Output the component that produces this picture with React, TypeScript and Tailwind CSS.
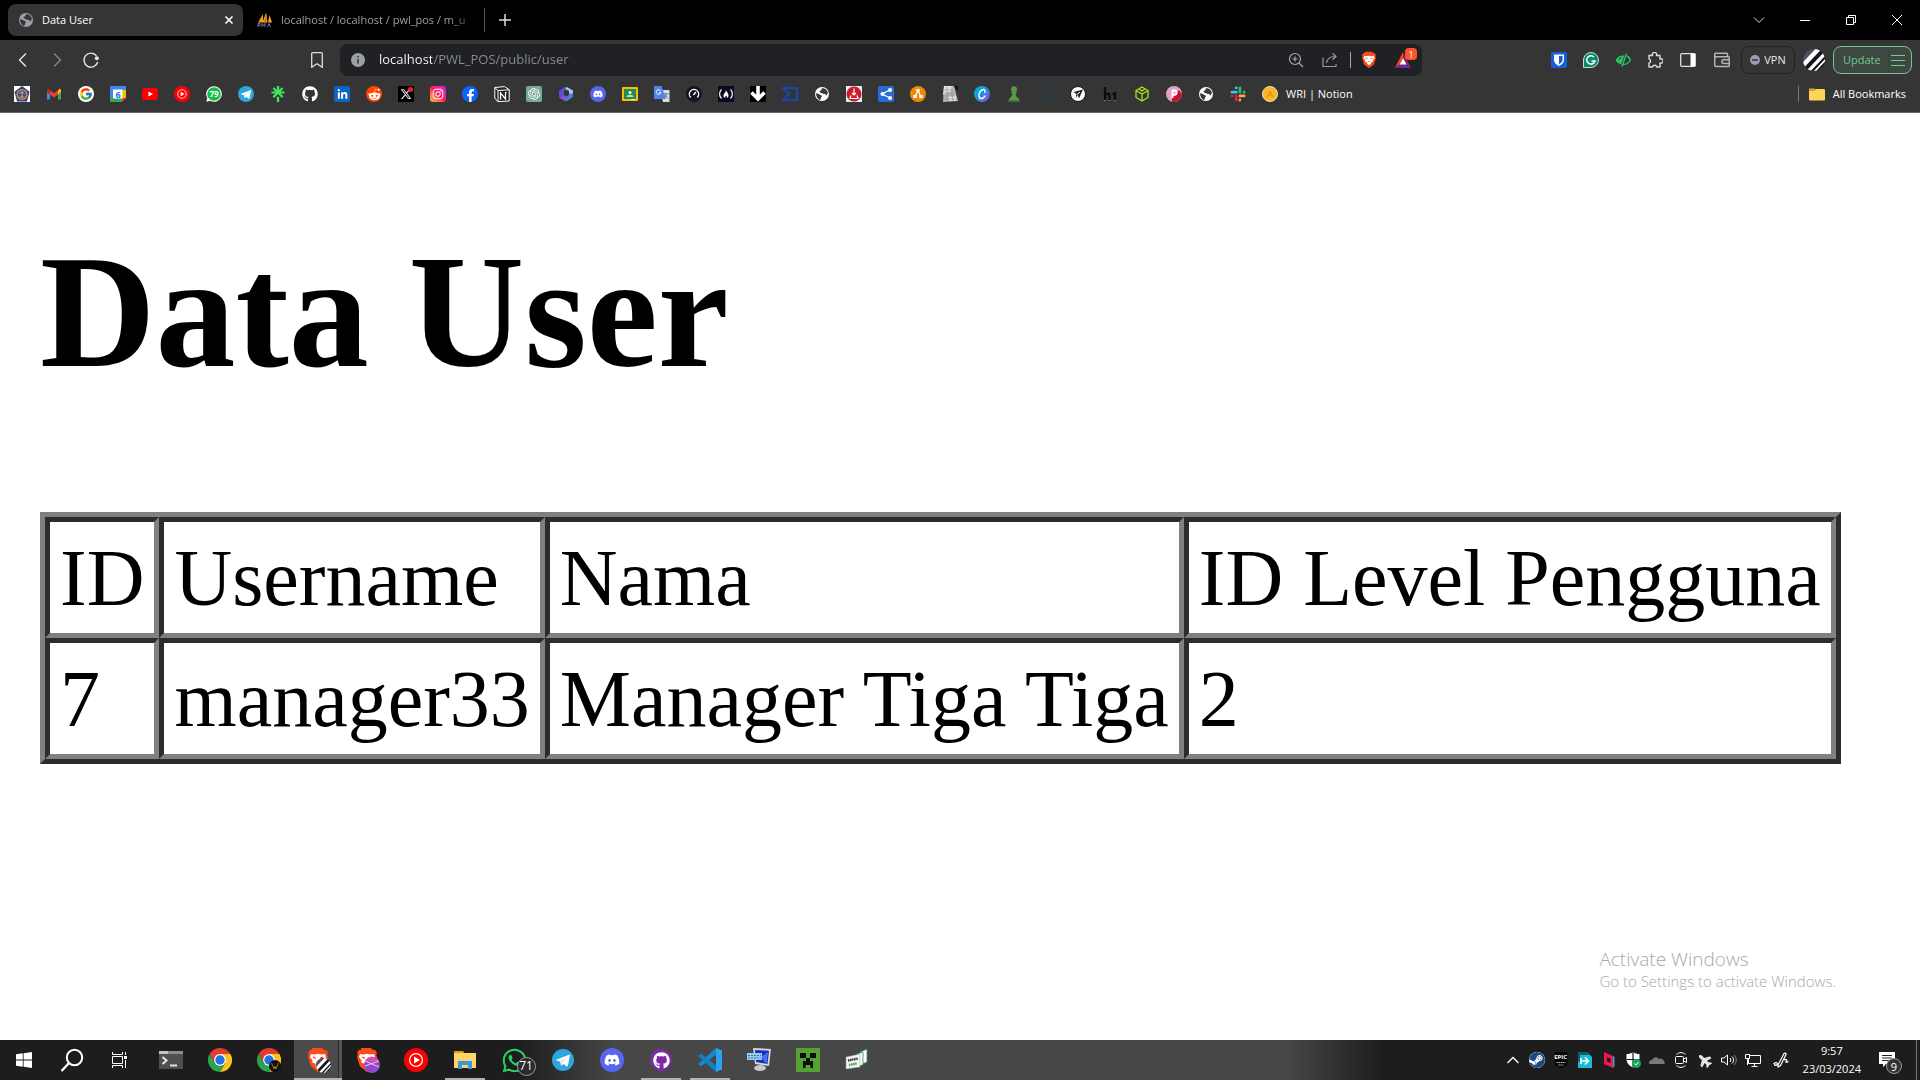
import React from "react";
import { FaGithub, FaRedditAlien, FaLinkedinIn, FaDiscord, FaFacebookF, FaWhatsapp, FaInstagram, FaPlane } from "react-icons/fa";
import { FaXTwitter } from "react-icons/fa6";
import { FcGoogle } from "react-icons/fc";
import { SiLinktree, SiOpenai, SiSteam } from "react-icons/si";

type SvgProps = { size?: number; box?: number; children: React.ReactNode };

const Svg = ({ size = 16, box = 16, children }: SvgProps) => (
  <svg width={size} height={size} viewBox={`0 0 ${box} ${box}`} fill="none" className="shrink-0" aria-hidden="true">
    {children}
  </svg>
);

const Tile = ({ className, children }: { className: string; children?: React.ReactNode }) => (
  <span className={`flex size-4 shrink-0 items-center justify-center overflow-hidden ${className}`}>{children}</span>
);

const Globe = ({ bg = "#9aa0a6", land = "#35363a" }: { bg?: string; land?: string }) => (
  <Svg>
    <circle cx="8" cy="8" r="7" fill={bg} />
    <path d="M2 7.200c1.600.1 2.600.6 3.600 1.400s2.200.5 2.200 1.700c0 1-1 1.200-1 2.300 0 .9-.3 1.300-1 1.300C3.600 13 2 10.500 2 7.200Z" fill={land} />
    <path d="M5.400 5.600c.3-1 1.300-1 1.900-1.700.5-.6.300-1.300 1-1.900 2.600.1 4.800 1.900 5.600 4.300-.3 1.300-.6 2.500-1.500 3.200-.8-.3-.6-1.300-1.500-1.500-1-.3-2 .1-2.700-.5-.8-.7-2.300-.5-2.800-1.900Z" fill={land} />
  </Svg>
);

const Telegram = ({ size = 16 }: { size?: number }) => (
  <Svg size={size} box={24}>
    <circle cx="12" cy="12" r="12" fill="#2da5de" />
    <path d="M4.500 11.800 18.600 6.200c.7-.2 1.200.2 1 1.200l-2.300 11c-.2.800-.7 1-1.300.6l-3.700-2.700-1.900 1.800c-.3.300-.6.300-.7-.3l-.9-4-3.900-1.200c-.8-.2-.8-.6-.4-.8Z" fill="#fff" />
    <path d="m9.200 13.500 7.300-4.900-5.900 5.800-.4 3Z" fill="#b9dcf0" />
  </Svg>
);

const YtMusic = ({ size = 16 }: { size?: number }) => (
  <Svg size={size} box={24}>
    <circle cx="12" cy="12" r="12" fill="#f00" />
    <circle cx="12" cy="12" r="6.400" stroke="#fff" strokeWidth="1.200" />
    <path d="m10 8.500 6 3.500-6 3.500Z" fill="#fff" />
  </Svg>
);

const BrowserBall = ({ children }: { children?: React.ReactNode }) => (
  <Svg size={24} box={24}>
    <path d="M12 6h10.400A12 12 0 0 1 12 24l5.200-9Z" fill="#fcc31e" />
    <path d="M1.600 6A12 12 0 0 1 22.400 6H12l-5.200 9Z" fill="#e33b2e" />
    <path d="M1.600 6 6.800 15A6 6 0 0 0 17.200 15L12 24A12 12 0 0 1 1.600 6Z" fill="#2ba24c" />
    <circle cx="12" cy="12" r="5.900" fill="#fff" />
    <circle cx="12" cy="12" r="4.700" fill="#1f72e8" />
    {children}
  </Svg>
);

const BraveLion = ({ size = 26, children }: { size?: number; children?: React.ReactNode }) => (
  <Svg size={size} box={26}>
    <path d="M7 1h10l2 2 2-.2 2 3-.8 2 .8 2.200-3 9.500L13 25l-7-5.500L3 10l.8-2.200L3 5.800l2-3L7 3Z" fill="#fb4a1c" />
    <path d="m6 7 4 .6 3-.8 3 .8 4-.6 1 3-2.600 3.500.3 2L15 17l1 1.200-3 2.400-3-2.400L11 17l-3.700-1.500.3-2L5 10Z" fill="#fff" />
    <path d="m8 9.500 3 1-.3 1.200L8 11ZM18 9.500l-3 1 .3 1.200L18 11ZM11 14.500h4L13 16Z" fill="#fb4a1c" />
    {children}
  </Svg>
);

const StripedDisc = ({ cx, cy, r, id }: { cx: number; cy: number; r: number; id: string }) => (
  <g>
    <clipPath id={id}>
      <circle cx={cx} cy={cy} r={r} />
    </clipPath>
    <g clipPath={`url(#${id})`}>
      <circle cx={cx} cy={cy} r={r} fill="#15161b" />
      <path d={`M${cx - r} ${cy - r}h${r * 1.4}l${-r * 1.4} ${r * 1.4}Z`} fill="#4c5066" />
      <path d={`M${cx - r} ${cy + r * 0.5}L${cx + r * 0.5} ${cy - r * 1.1}`} stroke="#fff" strokeWidth={r * 0.4} />
      <path d={`M${cx - r * 0.5} ${cy + r}L${cx + r * 1.1} ${cy - r * 0.7}`} stroke="#fff" strokeWidth={r * 0.3} />
      <path d={`M${cx} ${cy + r * 1.1}L${cx + r * 1.2} ${cy - r * 0.2}`} stroke="#fff" strokeWidth={r * 0.16} />
    </g>
  </g>
);

const bookmarks: { name: string; icon: React.ReactNode }[] = [
  {
    name: "Campus",
    icon: (
      <Tile className="bg-white">
        <Svg>
          <path d="m8 0 7.500 5.700L13 15.500H3L.5 5.700Z" fill="#24448c" />
          <circle cx="8" cy="8.500" r="5.500" fill="#e98a3a" />
          <circle cx="8" cy="8.500" r="4.200" fill="#34519a" />
          <path d="M8 5v7M5.500 7.500 8 6l2.500 1.500M5.500 11h5" stroke="#e5a04a" />
        </Svg>
      </Tile>
    ),
  },
  {
    name: "Gmail",
    icon: (
      <Svg>
        <path d="M1 4v9.500h3V7Z" fill="#4285f4" />
        <path d="M15 4v9.500h-3V7Z" fill="#34a853" />
        <path d="M1 4.500v1.700l3 2.300V4.700L2.800 3C2 2.400 1 3.200 1 4.500Z" fill="#c5221f" />
        <path d="M15 4.500v1.700l-3 2.300V4.700L13.200 3c.8-.6 1.800.2 1.800 1.500Z" fill="#fbbc04" />
        <path d="m4 4.200 4 3 4-3v4.300l-4 3-4-3Z" fill="#ea4335" />
      </Svg>
    ),
  },
  { name: "Google", icon: <Tile className="rounded-full bg-white"><FcGoogle size={14} /></Tile> },
  {
    name: "Calendar",
    icon: (
      <span className="relative flex size-4 items-center justify-center">
        <span className="absolute inset-0">
          <Svg>
            <path d="M0 1a1 1 0 0 1 1-1h14a1 1 0 0 1 1 1v3H0Z" fill="#4285f4" />
            <path d="M0 3h4v10H0Z" fill="#4285f4" />
            <path d="M12 4h4v8h-4Z" fill="#fbbc04" />
            <path d="M0 12h12v4H1a1 1 0 0 1-1-1Z" fill="#34a853" />
            <path d="M12 12h4l-4 4Z" fill="#ea4335" />
            <path d="M3 3.500h9.500v9H3Z" fill="#fff" />
          </Svg>
        </span>
        <span className="relative text-[9px] leading-none font-bold text-[#1a73e8]">6</span>
      </span>
    ),
  },
  {
    name: "YouTube",
    icon: (
      <Svg>
        <rect y="2" width="16" height="12" rx="3" fill="#f00" />
        <path d="m6.500 5.500 4.500 2.500-4.500 2.500Z" fill="#fff" />
      </Svg>
    ),
  },
  { name: "Music", icon: <YtMusic /> },
  {
    name: "WhatsApp",
    icon: (
      <span className="relative flex size-4 items-center justify-center">
        <span className="absolute inset-0">
          <Svg>
            <path d="M8 .2a7.800 7.800 0 1 1-3.800 14.600L.3 15.800l1-3.800A7.800 7.800 0 0 1 8 .2Z" fill="#fff" />
            <circle cx="8" cy="8" r="6.800" fill="#12c143" />
          </Svg>
        </span>
        <span className="relative text-[8px] leading-none font-bold text-white">79</span>
      </span>
    ),
  },
  { name: "Telegram", icon: <Telegram /> },
  { name: "Linktree", icon: <SiLinktree size={16} color="#43e660" /> },
  { name: "GitHub", icon: <FaGithub size={16} color="#fff" /> },
  { name: "LinkedIn", icon: <Tile className="rounded-[2px] bg-[#0a66c2]"><FaLinkedinIn size={11} color="#fff" /></Tile> },
  { name: "Reddit", icon: <Tile className="rounded-full bg-[#ff4500]"><FaRedditAlien size={13} color="#fff" /></Tile> },
  {
    name: "X",
    icon: (
      <Tile className="relative bg-black">
        <FaXTwitter size={12} color="#ddd" />
        <span className="absolute top-px right-px size-[5px] rounded-full bg-[#f4212e]" />
      </Tile>
    ),
  },
  { name: "Instagram", icon: <Tile className="rounded-[3px] bg-linear-to-tr from-[#ffb700] via-[#ff0f60] to-[#c400e0]"><FaInstagram size={12} color="#fff" /></Tile> },
  { name: "Facebook", icon: <Tile className="items-end rounded-full bg-[#0866ff]"><FaFacebookF size={13} color="#fff" /></Tile> },
  {
    name: "Notion",
    icon: (
      <Svg>
        <path d="m.8 1.500 9.700-.9 4.700 3.100V15l-11.400.6L.8 12Z" fill="#222" stroke="#fff" />
        <path d="m.8 1.500 3.200 3 11.200-.7M4 4.500v11" stroke="#fff" />
        <path d="M6.500 13V7l5 6V6.500M5.800 7h1.600M11 6.500h1.700M5.800 13h1.700" stroke="#fff" strokeWidth="1.200" />
      </Svg>
    ),
  },
  { name: "Chat", icon: <Tile className="rounded-[2px] bg-[#75a99b]"><SiOpenai size={12} color="#fff" /></Tile> },
  {
    name: "Office",
    icon: (
      <Svg>
        <path d="M6 1h4L6 5v6L2 13 1 11V5Z" fill="#5b4fd0" />
        <path d="m9 1 6 3.500v6L11 8V5L7 3Z" fill="#a9c4f5" />
        <path d="M15 7v4l-6 4H7l-5-3 4-1.500h3L12 8Z" fill="#4a7fe0" />
        <path d="m2 12 4-3 3 2.500-2 3.500Z" fill="#8c51cf" />
      </Svg>
    ),
  },
  { name: "Discord", icon: <Tile className="rounded-full bg-[#5865f2]"><FaDiscord size={10} color="#fff" /></Tile> },
  {
    name: "Classroom",
    icon: (
      <Svg>
        <rect y="1" width="16" height="14" rx="1" fill="#fbbc04" />
        <rect x="2" y="3" width="12" height="10" fill="#1e8e4e" />
        <circle cx="8" cy="6.500" r="1.500" fill="#fff" />
        <path d="M4.500 11c0-1.500 1.500-2.200 3.500-2.200s3.500.7 3.500 2.200Z" fill="#b7e0c6" />
        <path d="M9 13h4v1H9Z" fill="#eee" />
      </Svg>
    ),
  },
  {
    name: "Translate",
    icon: (
      <Svg>
        <path d="M6 4h9.500v12H9Z" fill="#d8dce0" />
        <path d="M0 0h7.500L12 13H0Z" fill="#5186e8" />
        <path d="M6.500 4.800A2.300 2.300 0 1 0 6.800 6.500H5" stroke="#fff" />
        <path d="M10 8h4.500M12 7v1c0 2-1 3.500-2 4m1-3 3 3.500" stroke="#5b7f93" />
      </Svg>
    ),
  },
  {
    name: "Speed",
    icon: (
      <Svg>
        <circle cx="8" cy="8" r="8" fill="#141526" />
        <path d="M4.700 11.500a4.700 4.700 0 1 1 6.600 0M7.300 9 10 6" stroke="#fff" strokeWidth="1.300" />
      </Svg>
    ),
  },
  {
    name: "Camp",
    icon: (
      <Tile className="bg-[#0a0a23]">
        <Svg>
          <path d="M3.500 3.500C1 5.500 1 10.500 3.500 12.500M12.500 3.500c2.500 2 2.500 7 0 9" stroke="#fff" strokeWidth="1.200" />
          <path d="M8 4c.3 2 2.500 3 2.500 5.500 0 1.200-.6 2-1.500 2.500.2-1.500-.5-2-1-2.500-.8 1-.9 1.500-.8 2.500-1.700-.5-2-2-1.500-3.500C6.200 7 8 6 8 4Z" fill="#fff" />
        </Svg>
      </Tile>
    ),
  },
  {
    name: "Download",
    icon: (
      <Tile className="bg-black">
        <Svg>
          <path d="M8 0v14M1.500 6.500 8 13l6.500-6.500" stroke="#fff" strokeWidth="3.600" />
        </Svg>
      </Tile>
    ),
  },
  {
    name: "Scanner",
    icon: (
      <Svg>
        <path d="M1 2h14v12H1l6-6Z" stroke="#0b4ddb" strokeWidth="1.500" />
      </Svg>
    ),
  },
  { name: "Site", icon: <Globe bg="#fff" land="#3b3b3b" /> },
  {
    name: "Saver",
    icon: (
      <Tile className="bg-[#d9f0f0]">
        <Svg>
          <circle cx="8" cy="8" r="7.500" fill="#d0182c" />
          <path d="M8 2.500v6M6 7l2 2 2-2M5 9.500 4 12.500h8l-1-3" stroke="#fff" strokeWidth="1.200" />
        </Svg>
      </Tile>
    ),
  },
  {
    name: "Share",
    icon: (
      <Tile className="rounded-[2px] bg-[#2a6bdb]">
        <Svg>
          <path d="M12 4 4 8l8 4" stroke="#fff" strokeWidth="1.300" />
          <circle cx="12" cy="4" r="2" fill="#fff" />
          <circle cx="4.500" cy="8" r="2" fill="#fff" />
          <circle cx="12" cy="12" r="2" fill="#fff" />
        </Svg>
      </Tile>
    ),
  },
  {
    name: "Diagrams",
    icon: (
      <Tile className="rounded-full bg-[#f08705]">
        <Svg>
          <path d="M8 5 5 10.500M8 5l3 5.500" stroke="#fff" strokeWidth="1.200" />
          <path d="M6.300 3h3.400v3H6.300ZM3.300 9h3.400v3H3.300ZM9.300 9h3.400v3H9.300Z" fill="#fff" />
        </Svg>
      </Tile>
    ),
  },
  {
    name: "Papers",
    icon: (
      <Svg>
        <path d="M2 0h10l4 15-15 1Z" fill="#b5b5b5" />
        <path d="M2 0h8v5L1 9ZM6 10h8v5H7Z" fill="#e2e2e2" />
        <path d="M2 4h9M2 7h10M1 10h12M2 13h12M5 1l1 15M9 1l2 14" stroke="#8b8b8b" strokeWidth=".6" />
        <path d="M12 0h4v5Z" fill="#111" />
      </Svg>
    ),
  },
  {
    name: "Canva",
    icon: (
      <Tile className="rounded-full bg-linear-to-br from-[#00c4cc] via-[#1a8ee0] to-[#7d2ae8]">
        <Svg>
          <path d="M10.800 6.200c.6-1.400 0-2.900-1.600-2.700-2.600.3-4.900 4.400-4.200 7 .6 2.800 4 2.500 6-.4" stroke="#fff" strokeWidth="1.500" strokeLinecap="round" />
        </Svg>
      </Tile>
    ),
  },
  {
    name: "Chess",
    icon: (
      <Svg>
        <circle cx="8" cy="3.200" r="3" fill="#5d9948" />
        <path d="M4.500 6h7L9.600 7.600c.2 2.400 1 3.600 2.700 4.700.8.6 1.200 1.700 1.200 3.200h-11c0-1.500.4-2.600 1.200-3.200C5.400 11.200 6.200 10 6.400 7.600Z" fill="#5d9948" />
        <path d="M2.500 14h11v1.500h-11Z" fill="#45753c" />
      </Svg>
    ),
  },
  {
    name: "Code",
    icon: (
      <Svg>
        <path d="M1 1h9v13H1ZM7.500 6H5v4h2.500M11 13.500h4" stroke="#1d3c50" />
      </Svg>
    ),
  },
  {
    name: "Send",
    icon: (
      <Svg>
        <circle cx="8" cy="8" r="7.500" fill="#fff" stroke="#111" />
        <path d="m3.500 6 9.500-2.500-4 9-1.200-3.500-2 3 .6-4Z" fill="#222" />
        <path d="m7 8.500 3-2.500" stroke="#fff" />
      </Svg>
    ),
  },
  {
    name: "Bounty",
    icon: (
      <Svg>
        <path d="M3 1v14M3 9c4-2.500 4.500-1 4.500 1v5M10.500 8.500 13 7v8" stroke="#0b0b0b" strokeWidth="2.200" />
        <path d="M2 14.500h2M6.500 14.500h2M12 14.500h2" stroke="#777" />
      </Svg>
    ),
  },
  {
    name: "Box",
    icon: (
      <Svg>
        <path d="m8 1 6 3.500v7L8 15l-6-3.500v-7ZM2 4.500 8 8l6-3.500M8 8v7M5 2.800 8 5l3-2.200" stroke="#a5e61b" strokeWidth="1.300" />
      </Svg>
    ),
  },
  {
    name: "Pink",
    icon: (
      <Svg>
        <circle cx="8" cy="8" r="8" fill="#e0a3c6" />
        <path d="M16 8A8 8 0 0 1 6 15.700L6 12l7-8Z" fill="#c4122f" />
        <path d="M6.500 12V4.500h2a2 2 0 0 1 0 4.300h-2" stroke="#fff" strokeWidth="1.800" />
      </Svg>
    ),
  },
  { name: "Site", icon: <Globe bg="#fff" land="#3b3b3b" /> },
  {
    name: "Slack",
    icon: (
      <Svg>
        <g strokeWidth="2.800" strokeLinecap="round">
          <path d="M6.200 1.800v.1M2 6.200h4.200" stroke="#36c5f0" />
          <path d="M9.900 2v4.200M14 6.200h.1" stroke="#2eb67d" />
          <path d="M9.900 9.900h4.200M9.900 14v.1" stroke="#ecb22e" />
          <path d="M6.200 9.900v4.200M2 9.900h.1" stroke="#e01e5a" />
        </g>
      </Svg>
    ),
  },
];

const Chip = ({ label, children, className = "" }: { label: string; children: React.ReactNode; className?: string }) => (
  <button type="button" aria-label={label} className={`flex shrink-0 items-center justify-center ${className}`}>
    {children}
  </button>
);

function TabStrip() {
  return (
    <div className="flex h-10 items-center bg-black pl-2 text-[11px] text-white">
      <div className="flex h-8 w-[235px] items-center rounded-lg bg-[#353535] pr-2 pl-[10px]">
        <Globe />
        <span className="ml-2 flex-1 truncate">Data User</span>
        <Chip label="Close tab" className="size-3">
          <Svg size={12} box={12}>
            <path d="m2.500 2.500 7 7m0-7-7 7" stroke="#fff" strokeWidth="1.600" />
          </Svg>
        </Chip>
      </div>
      <div className="flex h-8 w-[241px] items-center pl-[14px]">
        <Svg>
          <path d="M1 10.500 6 2v8.500Z" fill="#f89c0e" />
          <path d="M5.500 10.500 9 .5l1.500 10ZM11 10.500 12.500 3 15 10.500Z" fill="#f5a33a" />
          <path d="M7 10.500 9.500 1v9.500Z" fill="#c4741a" />
          <path d="M1 15v-3.500h2v2H1M5 15v-3.500l1.500 2 1.500-2V15M10.500 15l1.500-3.500 1.500 3.500" stroke="#6c78af" />
        </Svg>
        <span className="ml-2 bg-linear-to-r from-[#a9a9a9] from-[168px] to-[#222] to-[194px] bg-clip-text whitespace-nowrap text-transparent">
          localhost / localhost / pwl_pos / m_u
        </span>
      </div>
      <span className="h-6 w-px bg-[#555]" />
      <Chip label="New tab" className="ml-3 size-4">
        <Svg>
          <path d="M8 2v12M2 8h12" stroke="#ddd" strokeWidth="1.500" />
        </Svg>
      </Chip>
      <div className="ml-auto flex h-7 items-center">
        <Chip label="Search tabs" className="w-[46px]">
          <Svg size={12} box={12}>
            <path d="m1 3.500 5 5 5-5" stroke="#e0e0e0" />
          </Svg>
        </Chip>
        <Chip label="Minimize" className="w-[46px]">
          <Svg size={12} box={12}>
            <path d="M1 6.500h10" stroke="#fff" />
          </Svg>
        </Chip>
        <Chip label="Restore" className="w-[46px]">
          <Svg size={12} box={12}>
            <path d="M1.500 3.500h7v7h-7ZM3.500 3.500v-2h7v7h-2" stroke="#fff" />
          </Svg>
        </Chip>
        <Chip label="Close" className="w-[46px]">
          <Svg size={12} box={12}>
            <path d="m1 1 10 10m0-10L1 11" stroke="#fff" />
          </Svg>
        </Chip>
      </div>
    </div>
  );
}

function Toolbar() {
  return (
    <div className="flex h-10 items-center pr-2 pl-[14px]">
      <div className="flex items-center gap-4">
        <Chip label="Back" className="w-[18px]">
          <Svg size={18} box={18}>
            <path d="m12 2.500-6.500 6.500 6.500 6.500" stroke="#e8e8e8" strokeWidth="1.400" />
          </Svg>
        </Chip>
        <Chip label="Forward" className="w-[18px]">
          <Svg size={18} box={18}>
            <path d="m6 2.500 6.500 6.500-6.500 6.500" stroke="#888" strokeWidth="1.400" />
          </Svg>
        </Chip>
        <Chip label="Reload" className="w-[18px]">
          <Svg size={18} box={18}>
            <path d="M14.500 4.800A7 7 0 1 0 15.700 11" stroke="#e8e8e8" strokeWidth="1.400" />
            <circle cx="14.800" cy="7.300" r="2" fill="#e8e8e8" />
          </Svg>
        </Chip>
      </div>
      <Chip label="Bookmark this page" className="ml-[209px] size-4">
        <Svg>
          <path d="M2.700 1.700a1 1 0 0 1 1-1h8.600a1 1 0 0 1 1 1v13.600L8 11.800l-5.300 3.500Z" stroke="#ddd" strokeWidth="1.300" />
        </Svg>
      </Chip>
      <div className="ml-[15px] flex h-8 w-[1082px] min-w-0 items-center rounded-lg bg-[#202124] pr-[11px] pl-[11px]">
        <Svg size={14} box={14}>
          <circle cx="7" cy="7" r="7" fill="#9aa0a6" />
          <path d="M7 6v4.500M7 3v1.600" stroke="#35363a" strokeWidth="1.600" />
        </Svg>
        <input
          type="text"
          aria-label="Address"
          defaultValue="localhost/PWL_POS/public/user"
          className="ml-[14px] min-w-0 flex-1 bg-linear-to-r from-white from-[53px] to-[#8b8f94] to-[53px] bg-clip-text text-[13px] text-transparent outline-none"
        />
        <Chip label="Zoom" className="size-4">
          <Svg>
            <circle cx="7" cy="7" r="5.500" stroke="#aaa" strokeWidth="1.200" />
            <path d="m11 11 4 4M7 4.500v5M4.500 7h5" stroke="#aaa" strokeWidth="1.200" />
          </Svg>
        </Chip>
        <Chip label="Share" className="ml-[18px] size-4">
          <Svg>
            <path d="M1 5.500v9h13V12" stroke="#999" strokeWidth="1.200" />
            <path d="M4.500 11c.5-4 3-6.500 9-6.500M10.500 1.200 14 4.500l-3.500 3.300" stroke="#999" strokeWidth="1.200" />
          </Svg>
        </Chip>
        <span className="ml-3 h-4 w-px bg-[#aaa]" />
        <Chip label="Shields" className="ml-[10px] size-4">
          <BraveLion size={18} />
        </Chip>
        <Chip label="Rewards" className="relative ml-[18px] size-4">
          <Svg>
            <path d="m8 0 8 16-4.500-3-3.500-7Z" fill="#9e1f63" />
            <path d="M0 16h16l-4.500-4h-7Z" fill="#662d91" />
            <path d="m8 6 3.500 6.500h-7Z" fill="#fff" />
            <path d="M8 0 0 16l4.500-4L8 6Z" fill="#ff4724" />
          </Svg>
          <span className="absolute -top-1 -right-[6px] flex size-3 items-center justify-center rounded bg-[#fb542b] text-[9px] leading-none text-white">1</span>
        </Chip>
      </div>
      <div className="ml-auto flex items-center">
        <div className="flex items-center gap-4">
          <Chip label="Passwords" className="size-4">
            <Svg>
              <rect width="16" height="16" rx="2" fill="#175ddc" />
              <path d="M3 2.500h10V8c0 3-2.500 4.700-5 6-2.500-1.300-5-3-5-6Z" fill="#fff" />
              <path d="M8 4h3.500v4c0 1.800-1.500 3-3.500 4.200Z" fill="#175ddc" />
            </Svg>
          </Chip>
          <Chip label="Grammar" className="size-4">
            <Svg>
              <path d="M8 .5A7.500 7.500 0 1 1 8 15.500H.5V8A7.500 7.500 0 0 1 8 .5Z" fill="#0b8a6a" stroke="#c8dcd6" />
              <path d="M11 5a4.200 4.200 0 1 0 1 4H8.500" stroke="#fff" strokeWidth="1.500" />
            </Svg>
          </Chip>
          <Chip label="Privacy" className="size-4">
            <Svg>
              <path d="M.5 8C3 4 6 3 9.500 3.500L6 12.500C3.500 12 1.500 10 .5 8Z" fill="#2bc463" />
              <path d="M12 4c2 1 2.600 2.300 3.400 4-1.500 3-4 4.500-7.500 4.600M11.500 1.500l-4.500 13" stroke="#2bc463" strokeWidth="1.400" />
              <path d="M4 8a3 3 0 0 1 2.500-2.500" stroke="#124d2a" />
            </Svg>
          </Chip>
          <Chip label="Extensions" className="size-4">
            <Svg>
              <path d="M2 3.500h3.500a2.200 2.200 0 1 1 4 0H13V7a2.200 2.200 0 1 1 0 4v4H9.800a2.200 2.200 0 0 0-4.300 0H2v-4a2.200 2.200 0 0 0 0-4.200Z" stroke="#ddd" strokeWidth="1.400" strokeLinejoin="round" />
            </Svg>
          </Chip>
        </div>
        <Chip label="Sidebar" className="ml-[17px] size-4">
          <Svg>
            <rect x=".7" y="1.700" width="14.600" height="12.600" rx="1" stroke="#ddd" strokeWidth="1.300" />
            <path d="M10.500 1.500H15v13h-4.500Z" fill="#fff" />
          </Svg>
        </Chip>
        <Chip label="Wallet" className="ml-[18px] size-4">
          <Svg>
            <path d="M13.500 4.500V2.300a1 1 0 0 0-1-1H2a1.300 1.300 0 0 0-1.300 1.300v10.700A1.300 1.300 0 0 0 2 14.600h12a1.300 1.300 0 0 0 1.300-1.300V6a1.300 1.300 0 0 0-1.300-1.300H1M15 7.700H9.700a1.900 1.900 0 0 0 0 3.800H15" stroke="#b5b5b5" strokeWidth="1.500" />
          </Svg>
        </Chip>
        <button type="button" className="ml-[11px] flex h-7 w-[54px] items-center justify-center gap-1 rounded-lg border border-[#222] text-[11px] text-[#e8e8e8]">
          <Svg size={10} box={10}>
            <circle cx="5" cy="5" r="5" fill="#9a9cb0" />
            <path d="M2 5h6" stroke="#353535" strokeWidth="1.500" />
          </Svg>
          VPN
        </button>
        <Chip label="Profile" className="ml-2 size-[22px]">
          <Svg size={22} box={22}>
            <StripedDisc cx={11} cy={11} r={11} id="profile" />
          </Svg>
        </Chip>
        <button type="button" className="ml-2 flex h-7 w-[79px] items-center justify-between rounded-lg border border-[#75c793] bg-[#3c4840] pr-[6px] pl-[9px] text-[11px] text-[#75c793]">
          Update
          <Svg size={14} box={14}>
            <path d="M0 2.500h14M0 7.500h14M0 12.500h14" stroke="#75c793" />
          </Svg>
        </button>
      </div>
    </div>
  );
}

function BookmarksBar() {
  return (
    <nav className="flex h-7 items-center gap-4 px-[14px] text-[11px] text-white">
      {bookmarks.map((b, i) => (
        <a key={i} href="#" aria-label={b.name} className="flex size-4 shrink-0 items-center justify-center">
          {b.icon}
        </a>
      ))}
      <a href="#" className="flex shrink-0 items-center gap-2">
        <Svg>
          <circle cx="8" cy="8" r="7.500" fill="#f8b62a" stroke="#f6e3a8" />
          <path d="M5 11.500 8 5l3 6.500M6.300 9h3.500" stroke="#d99414" />
        </Svg>
        WRI | Notion
      </a>
      <div className="ml-auto flex shrink-0 items-center">
        <span className="mr-[10px] h-4 w-px bg-[#777]" />
        <a href="#" className="flex items-center gap-2">
          <Svg>
            <path d="M0 2.500h5.500l1.500 2H0Z" fill="#e2a832" />
            <path d="M0 13.500V4.500h5.500L7 3h8a1 1 0 0 1 1 1v9.500a1 1 0 0 1-1 1H1a1 1 0 0 1-1-1Z" fill="#fdd35a" />
          </Svg>
          All Bookmarks
        </a>
      </div>
    </nav>
  );
}

const rows = [
  ["ID", "Username", "Nama", "ID Level Pengguna"],
  ["7", "manager33", "Manager Tiga Tiga", "2"],
];

function Page() {
  return (
    <main className="relative flex-1 bg-white px-10 font-['Liberation_Serif',serif] text-black">
      <h1 className="py-[107px] text-[160px] leading-[185px] font-bold">Data User</h1>
      <table className="border-separate border-spacing-0 border-[5px] border-t-[#808080] border-r-[#2c2c2c] border-b-[#2c2c2c] border-l-[#808080] text-[80px] leading-[91px] whitespace-nowrap">
        <tbody>
          {rows.map((cells) => (
            <tr key={cells[0]}>
              {cells.map((cell) => (
                <td key={cell} className="border-[5px] border-t-[#2c2c2c] border-r-[#808080] border-b-[#808080] border-l-[#2c2c2c] px-[10px] pt-[11px] pb-[9px]">
                  {cell}
                </td>
              ))}
            </tr>
          ))}
        </tbody>
      </table>
      <aside className="absolute right-[84px] bottom-[49px] font-['Open_Sans',sans-serif] font-light text-[#a8a8a8]">
        <p className="text-[19px] leading-6">Activate Windows</p>
        <p className="text-[15px] leading-5">Go to Settings to activate Windows.</p>
      </aside>
    </main>
  );
}

const apps: { name: string; icon: React.ReactNode; state?: "active" | "open" }[] = [
  {
    name: "Terminal",
    icon: (
      <Svg size={24} box={24}>
        <path d="M0 3h24v18H0Z" fill="#4d4f51" />
        <path d="M0 3h24v3H0Z" fill="#8b8d8f" />
        <path d="M0 3h9v3H0Z" fill="#c4c4c4" />
        <path d="m3.500 9 4 3.500-4 3.500M11 17.500h7" stroke="#e5e5e5" strokeWidth="2" />
      </Svg>
    ),
  },
  { name: "Chrome", icon: <BrowserBall /> },
  {
    name: "Chrome profile",
    icon: (
      <BrowserBall>
        <circle cx="18" cy="18" r="6" fill="#111" />
        <path d="m14.500 15 2.500 6 1-3 1 3 2.500-6" stroke="#a5701c" />
      </BrowserBall>
    ),
  },
  { name: "Brave", state: "active", icon: <BraveLion><StripedDisc cx={18.500} cy={18.500} r={7.500} id="task" /></BraveLion> },
  {
    name: "Brave profile",
    icon: (
      <BraveLion>
        <circle cx="18" cy="18" r="8" fill="#8f49c8" />
        <path d="M11 14a8 8 0 0 1 14 0l-7 1Z" fill="#d84fb0" />
        <path d="m11 14 14 6m0-6-14 5" stroke="#f1c8f0" />
      </BraveLion>
    ),
  },
  { name: "YouTube Music", icon: <YtMusic size={24} /> },
  {
    name: "Explorer",
    state: "open",
    icon: (
      <Svg size={24} box={24}>
        <path d="M1 3h9l2 3H1Z" fill="#e2a100" />
        <path d="M1 5h22v15H1Z" fill="#fdd56a" />
        <path d="M5 13h14v8h-4v-4H9v4H5Z" fill="#3a97dd" />
      </Svg>
    ),
  },
  {
    name: "WhatsApp",
    icon: (
      <span className="relative">
        <FaWhatsapp size={27} color="#25d366" />
        <span className="absolute top-[10px] left-[16px] flex size-[19px] items-center justify-center rounded-full border border-[#999] bg-[#2b2b2b] text-[12px] leading-none text-white">71</span>
      </span>
    ),
  },
  { name: "Telegram", icon: <Telegram size={22} /> },
  { name: "Discord", icon: <span className="flex size-6 items-center justify-center rounded-full bg-[#5865f2]"><FaDiscord size={16} color="#fff" /></span> },
  { name: "GitHub", state: "open", icon: <span className="flex size-[22px] items-center justify-center rounded-full bg-[#7b2d9f]"><FaGithub size={17} color="#fff" /></span> },
  {
    name: "Code",
    state: "open",
    icon: (
      <Svg size={24} box={24}>
        <path d="m18 0 6 2.500v19L18 24Z" fill="#2ba3ee" />
        <path d="M18 0v6.500L3.500 18 1.800 17.400 0 16Z" fill="#1a86cf" />
        <path d="M0 8l1.800-1.600L3.500 6 18 17.500V24Z" fill="#1280c4" />
      </Svg>
    ),
  },
  {
    name: "Remote",
    icon: (
      <Svg size={24} box={24}>
        <path d="m6 0 18 1-2 17-14-2Z" fill="#d8d8d8" />
        <path d="m8 2 14 .7L20.500 16 9 14Z" fill="#1530c0" />
        <path d="m14 9 7-5-1.500 12Z" fill="#4d70f0" />
        <path d="M0 5h15v7H0Z" fill="#9dc8ee" />
        <path d="M1 7.500h13M1 10h13" stroke="#2d7ac2" strokeDasharray="2 1" />
        <ellipse cx="13" cy="20" rx="6" ry="3" fill="#c9c9c9" />
      </Svg>
    ),
  },
  {
    name: "Game",
    icon: (
      <Svg size={24} box={24}>
        <path d="M0 0h24v24H0Z" fill="#56a135" />
        <path d="M4 5h6v5H4ZM14 5h6v5h-6ZM10 10h4v3h3v7h-2.500v-3h-5v3H7v-7h3Z" fill="#080d06" />
      </Svg>
    ),
  },
  {
    name: "Display",
    icon: (
      <Svg size={24} box={24}>
        <path d="M15 4 22 1v13l-2 1-5 1Z" fill="#fff" stroke="#288a3c" strokeWidth=".8" />
        <path d="m12 6 6-2v13l-6 1Z" fill="#fff" stroke="#288a3c" strokeWidth=".8" />
        <path d="m1 9 14-3v13L1 21Z" fill="#f5f5f5" stroke="#999" strokeWidth=".5" />
        <path d="m3 12.500 10-2" stroke="#333" strokeWidth="2.400" strokeDasharray="1.500 .6" />
        <path d="m4 17 8-1.500" stroke="#3aa84e" strokeWidth="2.500" strokeDasharray="1.500 .6" />
      </Svg>
    ),
  },
];

const tray: { name: string; icon: React.ReactNode }[] = [
  { name: "Hidden icons", icon: <Svg><path d="m2.500 11 5.500-5.500 5.500 5.500" stroke="#fff" strokeWidth="1.300" /></Svg> },
  { name: "Steam", icon: <Tile className="rounded-full bg-white"><SiSteam size={16} color="#174a86" /></Tile> },
  {
    name: "Epic",
    icon: (
      <Tile className="relative">
        <Svg>
          <path d="M1.500 1.500A1.500 1.500 0 0 1 3 0h10a1.500 1.500 0 0 1 1.500 1.500v11.300L8 16l-6.500-3.200Z" fill="#050505" />
          <path d="M3.500 10.500h9M5.500 13h5" stroke="#bbb" strokeDasharray="1.500 .5" />
        </Svg>
        <span className="absolute top-[2px] text-[6px] leading-none font-bold text-white">EPIC</span>
      </Tile>
    ),
  },
  {
    name: "Transfer",
    icon: (
      <Svg>
        <path d="M1 0h9l5 5v11H1Z" fill="#18bcd4" />
        <path d="M1 0h9l2 3H3v8L1 9Z" fill="#0a5f78" />
        <path d="M4 9h7M8 5.500 11.500 9 8 12.500M4 6v6" stroke="#fff" strokeWidth="1.600" />
      </Svg>
    ),
  },
  {
    name: "Capture",
    icon: (
      <Svg>
        <path d="m3 0 9 4v12l-9-4Z" fill="#f0164e" />
        <path d="m6 5 3.500 1.500v4.500L6 9.500Z" fill="#1d1d1d" />
        <path d="m12 4 1.500 1v9L12 16Z" fill="#27a8d8" />
      </Svg>
    ),
  },
  {
    name: "Security",
    icon: (
      <Svg>
        <path d="M8 0c2 1.500 4 2 6.500 2v5c0 4-2.500 6.500-6.500 8.500C4 13.500 1.500 11 1.500 7V2C4 2 6 1.500 8 0Z" fill="#fff" />
        <path d="M8 0v15M1.500 7.500h13" stroke="#1d1d1d" strokeWidth="1.200" />
        <circle cx="11.500" cy="11.500" r="4.500" fill="#19a55a" />
        <path d="m9.500 11.500 1.500 1.500 2.500-3" stroke="#fff" />
      </Svg>
    ),
  },
  { name: "Cloud", icon: <Svg><path d="M0 11a3 3 0 0 1 3-3 4 4 0 0 1 7-1 3.500 3.500 0 0 1 5 2.500c1 .3 1 2.500 0 2.500H1.500C.6 12 0 11.600 0 11Z" fill="#7a7a7a" /></Svg> },
  {
    name: "Meet now",
    icon: (
      <Svg>
        <rect x="2.500" y="4.500" width="8" height="7" rx="1" stroke="#fff" />
        <path d="m10.500 7 3-1.500v5l-3-1.500M3.500 2.500c2.500-2.500 6.500-2.500 9 0M3.500 13.500c2.500 2.500 6.500 2.500 9 0" stroke="#fff" />
      </Svg>
    ),
  },
  { name: "Airplane", icon: <FaPlane size={15} color="#e5e5e5" className="rotate-225" /> },
  {
    name: "Volume",
    icon: (
      <Svg>
        <path d="M.5 6H3l3.500-3v10L3 10H.500ZM9 6c1 1 1 3 0 4M11 4.500c2 2 2 5 0 7" stroke="#fff" />
        <path d="M13 3c3 3 3 7 0 10" stroke="#888" />
      </Svg>
    ),
  },
  {
    name: "Network",
    icon: (
      <Svg>
        <path d="M5 3.500h10.500v8H3.500V7M9.500 11.500v3M6.500 14.500h6M.5 2.500h4v4h-4ZM2.500 6.500V13" stroke="#fff" />
      </Svg>
    ),
  },
];

function Taskbar() {
  return (
    <footer className="flex h-10 shrink-0 items-stretch bg-[linear-gradient(90deg,#1d1d1d_27%,#474747_32%,#474747_67%,#1d1d1d_72%)] text-white">
      <div className="flex">
        <Chip label="Start" className="w-12">
          <Svg>
            <path d="M0 2.300 6.800 1.300v6.300H0ZM7.600 1.200 16 0v7.600H7.600ZM0 8.400h6.800v6.300L0 13.700ZM7.600 8.400H16V16l-8.400-1.200Z" fill="#fff" />
          </Svg>
        </Chip>
        <Chip label="Search" className="w-12">
          <Svg size={24} box={24}>
            <circle cx="14.500" cy="9.500" r="7.700" stroke="#fff" strokeWidth="2" />
            <path d="m9 15-7.500 8" stroke="#fff" strokeWidth="2.400" />
          </Svg>
        </Chip>
        <Chip label="Task view" className="w-12">
          <Svg>
            <path d="M.5 0v2.500h10V0M.5 16v-2.500h10V16M.5 4.500h10v7H.5ZM13.500 0v3M13.500 8v8" stroke="#fff" />
            <path d="M12 4h3v3h-3Z" fill="#fff" />
          </Svg>
        </Chip>
      </div>
      <div className="ml-[3px] flex gap-px">
        {apps.map((app) => (
          <Chip
            key={app.name}
            label={app.name}
            className={
              app.state === "active"
                ? "w-12 border-b-2 border-[#b5b2af] bg-[linear-gradient(90deg,#4b4b4b_44px,#2a2a2a_44px,#2a2a2a_45px,#555_45px)] pt-[2px]"
                : app.state === "open"
                  ? "w-12 bg-[linear-gradient(#b5b2af,#b5b2af)] bg-[length:40px_2px] bg-bottom bg-no-repeat"
                  : "w-12"
            }
          >
            {app.icon}
          </Chip>
        ))}
      </div>
      <div className="ml-auto flex items-center">
        <div className="flex gap-2">
          {tray.map((item) => (
            <Chip key={item.name} label={item.name} className="size-4">
              {item.icon}
            </Chip>
          ))}
        </div>
        <Chip label="Pen" className="ml-3 size-4">
          <Svg>
            <path d="M.5 12c3-2.500 4.500-1 3.500.5-.6 1.500-3.500 1-2-.5M5 13 11 1.500c1-1 2.500 0 2 1L7.500 13.500 5 15ZM11 8c2-1.500 4 0 2 1.500-1 1 1 1 2.500 0" stroke="#fff" strokeWidth="1.200" />
          </Svg>
        </Chip>
        <time className="ml-[14px] text-center text-[11px] leading-[18px]">
          9:57
          <br />
          23/03/2024
        </time>
        <Chip label="Notifications" className="relative ml-[18px] size-6">
          <Svg size={24} box={24}>
            <path d="M0 4h16v12H7l-3 3v-3H0Z" fill="#fff" />
            <path d="M3 7.500h10M3 10h10M3 12.500h7" stroke="#222" />
          </Svg>
          <span className="absolute top-[10px] left-[7px] flex size-4 items-center justify-center rounded-full border border-[#999] bg-[#333] text-[11px] leading-none">9</span>
        </Chip>
        <span className="mr-[3px] ml-[13px] h-10 w-px bg-[#777]" />
      </div>
    </footer>
  );
}

export default function App() {
  return (
    <div className="flex min-h-screen flex-col overflow-hidden bg-white font-['Open_Sans','Noto_Sans',sans-serif]">
      <header>
        <TabStrip />
        <div className="border-b border-[#666] bg-[#353535] pb-1">
          <Toolbar />
          <BookmarksBar />
        </div>
      </header>
      <Page />
      <Taskbar />
    </div>
  );
}
